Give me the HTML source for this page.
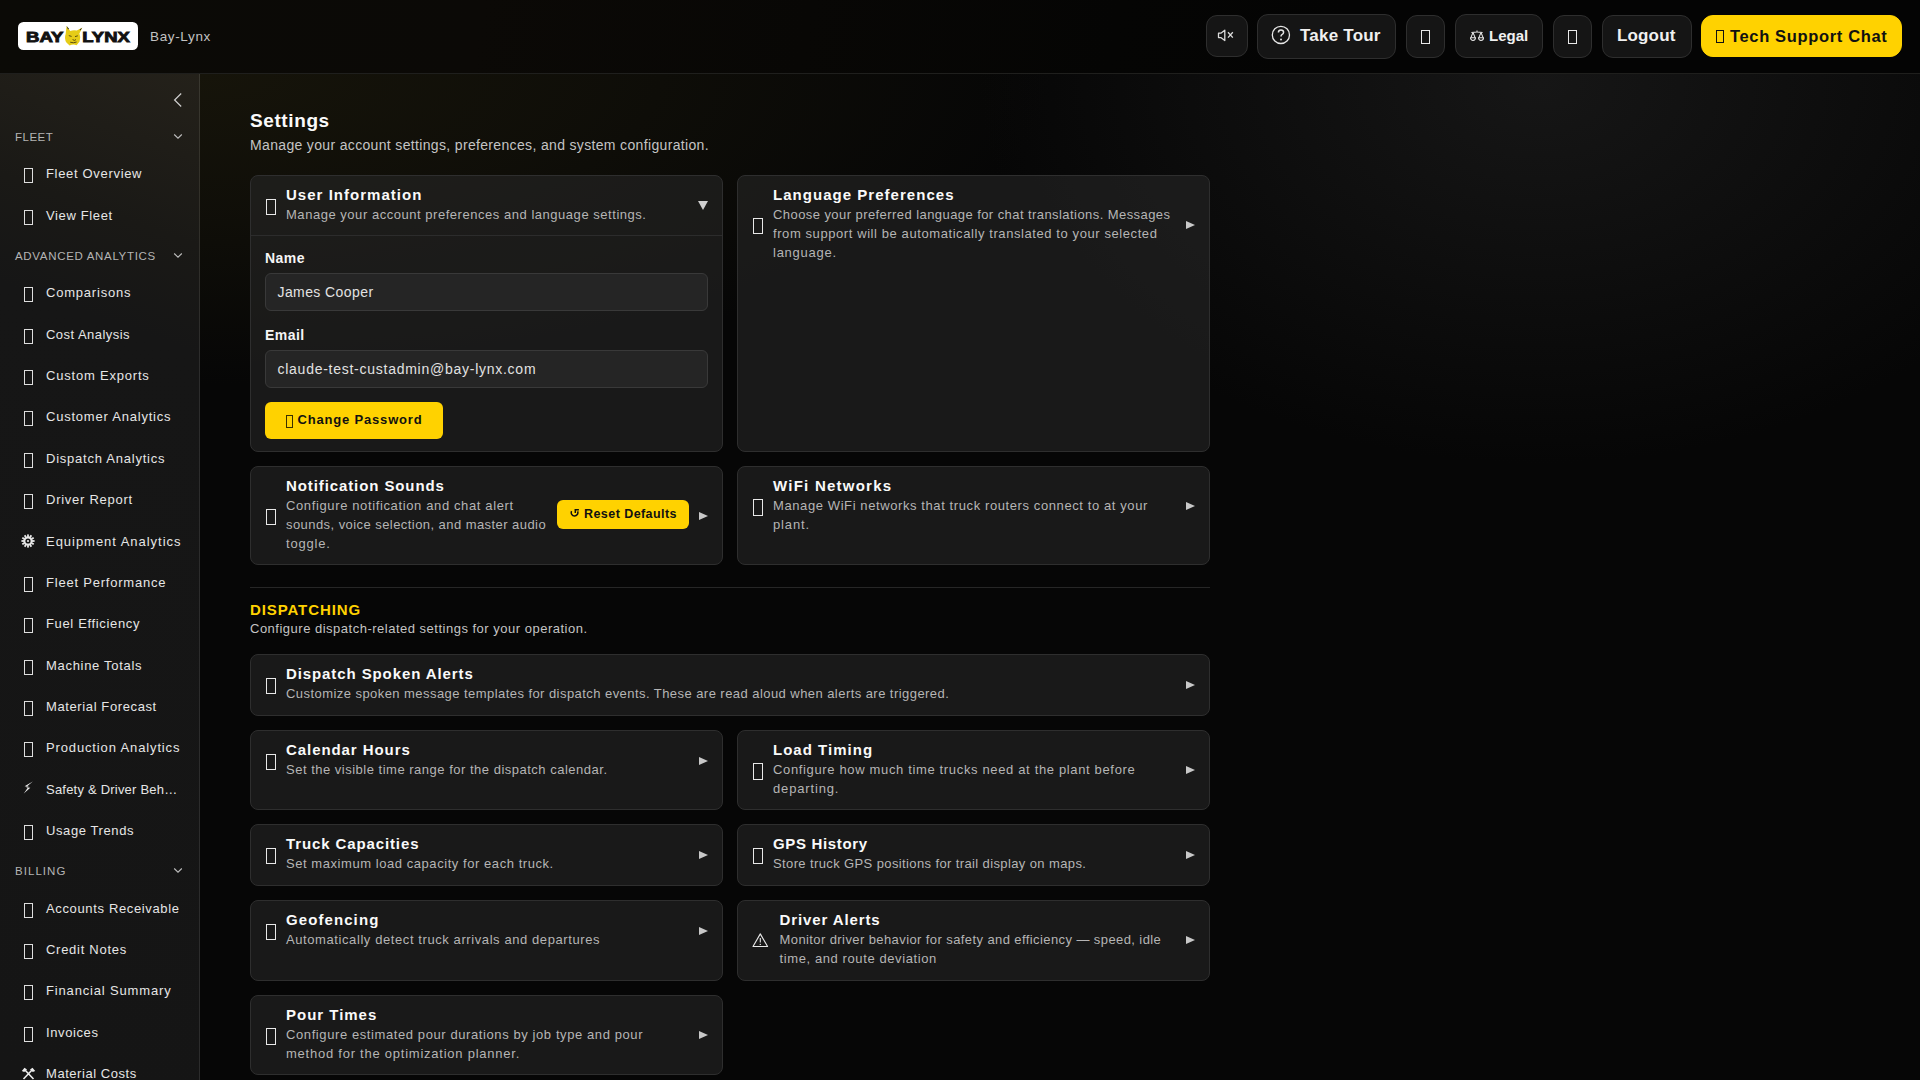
<!DOCTYPE html><html><head><meta charset="utf-8"><style>
*{box-sizing:border-box;margin:0;padding:0}
html,body{width:1920px;height:1080px;overflow:hidden;background:#080808;font-family:"Liberation Sans",sans-serif;color:#f2f2f2}
.a{position:absolute;white-space:nowrap}
#hdr{position:absolute;left:0;top:0;width:1920px;height:74px;background:linear-gradient(100deg,#0b0a06 0%,#0b0906 25%,#080705 42%,#050504 58%,#040404 70%,#040404 100%);border-bottom:1px solid #1f1f1d}
#logo{position:absolute;left:18px;top:22px;width:120px;height:28px;background:#fff;border-radius:6px}
.hbtn{position:absolute;top:15px;height:42px;background:#151515;border:1px solid #2e2e2e;border-radius:11px}
.tofu{position:absolute;border:1px solid #e8e8e8}
#side{position:absolute;left:0;top:74px;width:200px;height:1006px;background:linear-gradient(200deg,#24211a 0%,#1f1d18 8%,#1a1916 16%,#161616 26%,#151515 100%);}
#sideb{position:absolute;left:199px;top:74px;width:1px;height:1006px;background:linear-gradient(180deg,#3a3830 0px,#323029 120px,#2c2c2c 300px,#2c2c2c 100%)}
.sec{position:absolute;left:15px;font-size:11.5px;letter-spacing:1.2px;color:#b4b4b4;line-height:14px;white-space:nowrap}
.it{position:absolute;left:46px;font-size:13px;line-height:20px;color:#e6e6e6;letter-spacing:0.65px;white-space:nowrap}
#main{position:absolute;left:200px;top:74px;width:1720px;height:1006px;background:radial-gradient(ellipse 560px 380px at 1340px 10px,#161616 0%,rgba(22,22,22,0) 100%),radial-gradient(ellipse 850px 310px at 0px 0px,rgb(22,20,10) 0%,rgba(22,20,10,0.6) 45%,rgba(22,20,10,0) 100%),#060606}
.card{position:absolute;background:rgba(39,39,39,0.6);border:1px solid #2e2e2e;border-radius:8px}
.ti{position:absolute;font-size:15px;font-weight:700;color:#fafafa;letter-spacing:0.9px;white-space:nowrap;line-height:19px}
.de{position:absolute;font-size:13px;color:#b5b5b5;letter-spacing:0.45px;line-height:19px;white-space:nowrap}
.ar{position:absolute;width:0;height:0;border-left:9.5px solid #c8c8c8;border-top:4.7px solid transparent;border-bottom:4.7px solid transparent}
</style></head><body>
<div id="hdr">
<svg class="a" style="left:18px;top:22px" width="120" height="28" viewBox="0 0 120 28"><rect x="0" y="0" width="120" height="28" rx="5.5" fill="#fff"/><text x="8" y="19.6" font-family="Liberation Sans" font-weight="700" font-size="15" textLength="37.5" lengthAdjust="spacingAndGlyphs" fill="#111" stroke="#111" stroke-width="0.9">BAY</text><text x="64.3" y="19.6" font-family="Liberation Sans" font-weight="700" font-size="15" textLength="47.5" lengthAdjust="spacingAndGlyphs" fill="#111" stroke="#111" stroke-width="0.9">LYNX</text><path d="M48.6 4.0 L52.2 9.0 Q55.6 7.6 58.8 8.6 L64.2 5.8 L61.4 11.6 Q63.2 15.6 61.6 19.4 L58.6 23.2 Q55 21.6 51.6 23.6 L48.4 20.6 Q46 16.4 47.6 12.2 Z" fill="#e6cc17"/><path d="M48.6 4.0 L50 7.6 L51 6.8 Z M64.2 5.8 L61.6 7.4 L62.4 8.4 Z" fill="#222"/><path d="M50.8 13.6 L53.6 14.4 M57 14.6 L59.8 13.8 M54.6 17.6 L56.4 18.4 L58 17.6 M52.2 20.2 Q55.2 21.4 58.6 20" stroke="#4a4010" stroke-width="0.9" fill="none"/></svg>
<div class="a" style="left:150px;top:29px;font-size:13.5px;color:#c2c2c2;letter-spacing:0.65px;line-height:16px">Bay-Lynx</div>
<div class="hbtn" style="left:1206px;width:42px;height:42px"></div>
<svg class="a" style="left:1217px;top:29px" width="18" height="13" viewBox="0 0 18 13"><path d="M1.5 4.2 H3.8 L7.8 1.2 V11.6 L3.8 8.6 H1.5 Z" fill="none" stroke="#dcdcdc" stroke-width="1.3" stroke-linejoin="round"/><path d="M11 3.2 L15.8 8.6 M15.8 3.2 L11 8.6" stroke="#dcdcdc" stroke-width="1.3"/></svg>
<div class="hbtn" style="left:1257px;top:14px;width:139px;height:45px"></div>
<svg class="a" style="left:1271px;top:25px" width="20" height="20" viewBox="0 0 20 20"><circle cx="9.9" cy="9.9" r="8.6" fill="none" stroke="#e6e6e6" stroke-width="1.3"/><path d="M7.4 7.6 Q7.4 4.9 10 4.9 Q12.6 4.9 12.6 7.3 Q12.6 8.9 10.9 9.6 Q10 10.1 10 11.5" fill="none" stroke="#e6e6e6" stroke-width="1.5"/><circle cx="10" cy="14.4" r="1" fill="#e6e6e6"/></svg>
<div class="a" style="left:1300px;top:26px;font-size:17px;font-weight:700;line-height:20px;color:#f0f0f0;letter-spacing:0.22px">Take Tour</div>
<div class="hbtn" style="left:1406px;width:39px;height:43px"></div>
<div class="tofu" style="left:1421px;top:30px;width:9px;height:14px"></div>
<div class="hbtn" style="left:1455px;top:14px;width:88px;height:44px"></div>
<svg class="a" style="left:1470px;top:29.5px" width="14" height="12" viewBox="0 0 14 12"><path d="M7 0.4 V2.2 M1.4 2.6 Q7 1.4 12.6 2.6 M3 2.5 L0.9 7.6 M3 2.5 L5.1 7.6 M11 2.5 L8.9 7.6 M11 2.5 L13.1 7.6" stroke="#e8e8e8" stroke-width="1.05" fill="none"/><path d="M0.5 7.8 H5.5 A2.5 2.6 0 0 1 0.5 7.8 Z M8.5 7.8 H13.5 A2.5 2.6 0 0 1 8.5 7.8 Z" fill="none" stroke="#e8e8e8" stroke-width="1.05"/></svg>
<div class="a" style="left:1489px;top:26px;font-size:15px;font-weight:700;line-height:20px;color:#f0f0f0">Legal</div>
<div class="hbtn" style="left:1553px;width:39px;height:43px"></div>
<div class="tofu" style="left:1568px;top:30px;width:9px;height:14px"></div>
<div class="hbtn" style="left:1602px;width:90px;height:43px"></div>
<div class="a" style="left:1617px;top:26px;font-size:17px;font-weight:700;line-height:20px;color:#f0f0f0;letter-spacing:0.15px">Logout</div>
<div class="hbtn" style="left:1701px;width:201px;height:42px;background:#ffd200;border-color:#ffd200;border-radius:12px"></div>
<div class="tofu" style="left:1716px;top:30px;width:8px;height:13px;border-color:#111"></div>
<div class="a" style="left:1730px;top:25.5px;font-size:16.5px;font-weight:700;line-height:20px;color:#111;letter-spacing:0.65px">Tech Support Chat</div>
</div>
<div id="side"></div><div id="sideb"></div>
<svg class="a" style="left:173px;top:92px" width="10" height="16" viewBox="0 0 10 16"><path d="M8.2 1.5 L1.6 8 L8.2 14.5" fill="none" stroke="#cfcfcf" stroke-width="1.2"/></svg>
<div class="sec" style="top:129.5px;letter-spacing:0.501px">FLEET</div>
<svg class="a" style="left:173px;top:133px" width="10" height="7" viewBox="0 0 10 7"><path d="M1.2 1.5 L5 5.2 L8.8 1.5" fill="none" stroke="#bdbdbd" stroke-width="1.1"/></svg>
<div class="sec" style="top:248.5px;letter-spacing:0.678px">ADVANCED ANALYTICS</div>
<svg class="a" style="left:173px;top:252px" width="10" height="7" viewBox="0 0 10 7"><path d="M1.2 1.5 L5 5.2 L8.8 1.5" fill="none" stroke="#bdbdbd" stroke-width="1.1"/></svg>
<div class="sec" style="top:863.5px;letter-spacing:1.048px">BILLING</div>
<svg class="a" style="left:173px;top:867px" width="10" height="7" viewBox="0 0 10 7"><path d="M1.2 1.5 L5 5.2 L8.8 1.5" fill="none" stroke="#bdbdbd" stroke-width="1.1"/></svg>
<div class="tofu" style="left:24px;top:168px;width:9px;height:14.5px;border-color:#dedede"></div>
<div class="it" style="top:163.5px;letter-spacing:0.677px">Fleet Overview</div>
<div class="tofu" style="left:24px;top:210px;width:9px;height:14.5px;border-color:#dedede"></div>
<div class="it" style="top:205.5px;letter-spacing:0.637px">View Fleet</div>
<div class="tofu" style="left:24px;top:287px;width:9px;height:14.5px;border-color:#dedede"></div>
<div class="it" style="top:282.5px;letter-spacing:0.791px">Comparisons</div>
<div class="tofu" style="left:24px;top:329px;width:9px;height:14.5px;border-color:#dedede"></div>
<div class="it" style="top:324.5px;letter-spacing:0.454px">Cost Analysis</div>
<div class="tofu" style="left:24px;top:370px;width:9px;height:14.5px;border-color:#dedede"></div>
<div class="it" style="top:365.5px;letter-spacing:0.794px">Custom Exports</div>
<div class="tofu" style="left:24px;top:411px;width:9px;height:14.5px;border-color:#dedede"></div>
<div class="it" style="top:406.5px;letter-spacing:0.778px">Customer Analytics</div>
<div class="tofu" style="left:24px;top:453px;width:9px;height:14.5px;border-color:#dedede"></div>
<div class="it" style="top:448.5px;letter-spacing:0.765px">Dispatch Analytics</div>
<div class="tofu" style="left:24px;top:494px;width:9px;height:14.5px;border-color:#dedede"></div>
<div class="it" style="top:489.5px;letter-spacing:0.742px">Driver Report</div>
<svg class="a" style="left:21px;top:533.5px" width="14" height="14" viewBox="0 0 14 14"><g fill="#e8e8e8"><circle cx="7" cy="7" r="4.6"/><rect x="6.1" y="0.4" width="1.8" height="2.6" transform="rotate(0 7 7)"/><rect x="6.1" y="0.4" width="1.8" height="2.6" transform="rotate(30 7 7)"/><rect x="6.1" y="0.4" width="1.8" height="2.6" transform="rotate(60 7 7)"/><rect x="6.1" y="0.4" width="1.8" height="2.6" transform="rotate(90 7 7)"/><rect x="6.1" y="0.4" width="1.8" height="2.6" transform="rotate(120 7 7)"/><rect x="6.1" y="0.4" width="1.8" height="2.6" transform="rotate(150 7 7)"/><rect x="6.1" y="0.4" width="1.8" height="2.6" transform="rotate(180 7 7)"/><rect x="6.1" y="0.4" width="1.8" height="2.6" transform="rotate(210 7 7)"/><rect x="6.1" y="0.4" width="1.8" height="2.6" transform="rotate(240 7 7)"/><rect x="6.1" y="0.4" width="1.8" height="2.6" transform="rotate(270 7 7)"/><rect x="6.1" y="0.4" width="1.8" height="2.6" transform="rotate(300 7 7)"/><rect x="6.1" y="0.4" width="1.8" height="2.6" transform="rotate(330 7 7)"/></g><circle cx="7" cy="7" r="2.6" fill="#151515"/><circle cx="7" cy="7" r="1.1" fill="#e8e8e8"/></svg>
<div class="it" style="top:531.5px;letter-spacing:0.968px">Equipment Analytics</div>
<div class="tofu" style="left:24px;top:577px;width:9px;height:14.5px;border-color:#dedede"></div>
<div class="it" style="top:572.5px;letter-spacing:0.785px">Fleet Performance</div>
<div class="tofu" style="left:24px;top:618px;width:9px;height:14.5px;border-color:#dedede"></div>
<div class="it" style="top:613.5px;letter-spacing:0.657px">Fuel Efficiency</div>
<div class="tofu" style="left:24px;top:660px;width:9px;height:14.5px;border-color:#dedede"></div>
<div class="it" style="top:655.5px;letter-spacing:0.694px">Machine Totals</div>
<div class="tofu" style="left:24px;top:701px;width:9px;height:14.5px;border-color:#dedede"></div>
<div class="it" style="top:696.5px;letter-spacing:0.611px">Material Forecast</div>
<div class="tofu" style="left:24px;top:742px;width:9px;height:14.5px;border-color:#dedede"></div>
<div class="it" style="top:737.5px;letter-spacing:0.864px">Production Analytics</div>
<svg class="a" style="left:23px;top:781px" width="11" height="13" viewBox="0 0 11 13"><path d="M9.8 0.5 L3 6.3 L7.3 6.8 L0.8 12.6 L5.6 5.6 L1.6 5.2 Z" fill="#ececec"/></svg>
<div class="it" style="top:779.5px;letter-spacing:0.213px">Safety &amp; Driver Beh…</div>
<div class="tofu" style="left:24px;top:825px;width:9px;height:14.5px;border-color:#dedede"></div>
<div class="it" style="top:820.5px;letter-spacing:0.597px">Usage Trends</div>
<div class="tofu" style="left:24px;top:903px;width:9px;height:14.5px;border-color:#dedede"></div>
<div class="it" style="top:898.5px;letter-spacing:0.644px">Accounts Receivable</div>
<div class="tofu" style="left:24px;top:944px;width:9px;height:14.5px;border-color:#dedede"></div>
<div class="it" style="top:939.5px;letter-spacing:0.723px">Credit Notes</div>
<div class="tofu" style="left:24px;top:985px;width:9px;height:14.5px;border-color:#dedede"></div>
<div class="it" style="top:980.5px;letter-spacing:0.840px">Financial Summary</div>
<div class="tofu" style="left:24px;top:1027px;width:9px;height:14.5px;border-color:#dedede"></div>
<div class="it" style="top:1022.5px;letter-spacing:0.600px">Invoices</div>
<svg class="a" style="left:21px;top:1066.5px" width="15" height="13" viewBox="0 0 15 13"><path d="M2.5 12 L11.5 2.5 M12.5 12 L3.5 2.5" stroke="#ececec" stroke-width="1.6"/><path d="M0.8 4 L3.5 0.8 L6 2.6 L3.2 5 Z M14.2 4 L11.5 0.8 L9 2.6 L11.8 5 Z" fill="#ececec"/></svg>
<div class="it" style="top:1063.5px;letter-spacing:0.548px">Material Costs</div>
<div id="main"></div>
<div class="a" style="left:250px;top:110px;font-size:19px;font-weight:700;line-height:22px;color:#fafafa;letter-spacing:0.6px">Settings</div>
<div class="a" style="left:250px;top:136px;font-size:14px;line-height:18px;color:#c4c4c4;letter-spacing:0.34px">Manage your account settings, preferences, and system configuration.</div>
<div class="card" style="left:250px;top:175px;width:473px;height:277px"></div>
<div class="tofu" style="left:265.5px;top:198.5px;width:10.5px;height:16.5px"></div>
<div class="ti" style="left:286px;top:185.3px;letter-spacing:1.026px">User Information</div>
<div class="de" style="left:286px;top:205.0px;letter-spacing:0.533px">Manage your account preferences and language settings.</div>
<div class="a" style="left:698px;top:201px;width:0;height:0;border-top:9px solid #cfcfcf;border-left:5px solid transparent;border-right:5px solid transparent"></div>
<div class="a" style="left:251px;top:235px;width:471px;height:1px;background:#2c2c2c"></div>
<div class="a" style="left:265px;top:249px;font-size:14px;font-weight:700;line-height:19px;color:#f5f5f5;letter-spacing:0.45px">Name</div>
<div class="a" style="left:265px;top:273px;width:443px;height:38px;background:#252525;border:1px solid #393939;border-radius:6px"></div>
<div class="a" style="left:277.5px;top:283.3px;font-size:14px;line-height:19px;color:#e2e2e2;letter-spacing:0.41px">James Cooper</div>
<div class="a" style="left:265px;top:326px;font-size:14px;font-weight:700;line-height:19px;color:#f5f5f5;letter-spacing:0.45px">Email</div>
<div class="a" style="left:265px;top:350px;width:443px;height:38px;background:#252525;border:1px solid #393939;border-radius:6px"></div>
<div class="a" style="left:277.5px;top:360.3px;font-size:14px;line-height:19px;color:#e2e2e2;letter-spacing:0.74px">claude-test-custadmin@bay-lynx.com</div>
<div class="a" style="left:265px;top:402px;width:178px;height:37px;background:#ffd200;border-radius:6px"></div>
<div class="tofu" style="left:285.5px;top:414.5px;width:7px;height:13px;border-color:#3a3000"></div>
<div class="a" style="left:297.5px;top:412px;font-size:13px;font-weight:700;line-height:16px;color:#111;letter-spacing:0.82px">Change Password</div>
<div class="card" style="left:737px;top:175px;width:473px;height:277px"></div>
<div class="tofu" style="left:752.5px;top:217.5px;width:10.5px;height:16.5px"></div>
<div class="ti" style="left:773px;top:185.3px;letter-spacing:1.031px">Language Preferences</div>
<div class="de" style="left:773px;top:205.0px;letter-spacing:0.431px">Choose your preferred language for chat translations. Messages</div>
<div class="de" style="left:773px;top:224.0px;letter-spacing:0.584px">from support will be automatically translated to your selected</div>
<div class="de" style="left:773px;top:243.0px;letter-spacing:0.747px">language.</div>
<div class="ar" style="left:1185.5px;top:220.8px"></div>
<div class="card" style="left:250px;top:466px;width:473px;height:99px"></div>
<div class="tofu" style="left:265.5px;top:508.5px;width:10.5px;height:16.5px"></div>
<div class="ti" style="left:286px;top:476.3px;letter-spacing:0.902px">Notification Sounds</div>
<div class="de" style="left:286px;top:496.0px;letter-spacing:0.627px">Configure notification and chat alert</div>
<div class="de" style="left:286px;top:515.0px;letter-spacing:0.438px">sounds, voice selection, and master audio</div>
<div class="de" style="left:286px;top:534.0px;letter-spacing:0.792px">toggle.</div>
<div class="ar" style="left:698.5px;top:511.8px"></div>
<div class="a" style="left:557px;top:500px;width:132px;height:29px;background:#ffd200;border-radius:6px"></div>
<svg class="a" style="left:570px;top:508px" width="10" height="10" viewBox="0 0 10 10"><path d="M1.6 3.2 A3.3 3.3 0 1 0 7.6 3.4" fill="none" stroke="#111" stroke-width="1.5"/><path d="M5.3 5 V1.7 H8.9" fill="none" stroke="#111" stroke-width="1.5"/></svg>
<div class="a" style="left:584px;top:505.5px;font-size:12.5px;font-weight:700;line-height:16px;color:#111;letter-spacing:0.44px">Reset Defaults</div>
<div class="card" style="left:737px;top:466px;width:473px;height:99px"></div>
<div class="tofu" style="left:752.5px;top:499.0px;width:10.5px;height:16.5px"></div>
<div class="ti" style="left:773px;top:476.3px;letter-spacing:1.240px">WiFi Networks</div>
<div class="de" style="left:773px;top:496.0px;letter-spacing:0.596px">Manage WiFi networks that truck routers connect to at your</div>
<div class="de" style="left:773px;top:515.0px;letter-spacing:0.858px">plant.</div>
<div class="ar" style="left:1185.5px;top:502.3px"></div>
<div class="a" style="left:250px;top:587px;width:960px;height:1px;background:#262626"></div>
<div class="a" style="left:250px;top:601px;font-size:15px;font-weight:700;line-height:18px;color:#ffd200;letter-spacing:0.9px">DISPATCHING</div>
<div class="a" style="left:250px;top:620px;font-size:13px;line-height:18px;color:#c4c4c4;letter-spacing:0.5px">Configure dispatch-related settings for your operation.</div>
<div class="card" style="left:250px;top:654px;width:960px;height:62px"></div>
<div class="tofu" style="left:265.5px;top:677.5px;width:10.5px;height:16.5px"></div>
<div class="ti" style="left:286px;top:664.3px;letter-spacing:0.903px">Dispatch Spoken Alerts</div>
<div class="de" style="left:286px;top:684.0px;letter-spacing:0.443px">Customize spoken message templates for dispatch events. These are read aloud when alerts are triggered.</div>
<div class="ar" style="left:1185.5px;top:680.8px"></div>
<div class="card" style="left:250px;top:730px;width:473px;height:80px"></div>
<div class="tofu" style="left:265.5px;top:753.5px;width:10.5px;height:16.5px"></div>
<div class="ti" style="left:286px;top:740.3px;letter-spacing:0.931px">Calendar Hours</div>
<div class="de" style="left:286px;top:760.0px;letter-spacing:0.503px">Set the visible time range for the dispatch calendar.</div>
<div class="ar" style="left:698.5px;top:756.8px"></div>
<div class="card" style="left:737px;top:730px;width:473px;height:80px"></div>
<div class="tofu" style="left:752.5px;top:763.0px;width:10.5px;height:16.5px"></div>
<div class="ti" style="left:773px;top:740.3px;letter-spacing:1.021px">Load Timing</div>
<div class="de" style="left:773px;top:760.0px;letter-spacing:0.650px">Configure how much time trucks need at the plant before</div>
<div class="de" style="left:773px;top:779.0px;letter-spacing:0.841px">departing.</div>
<div class="ar" style="left:1185.5px;top:766.3px"></div>
<div class="card" style="left:250px;top:824px;width:473px;height:62px"></div>
<div class="tofu" style="left:265.5px;top:847.5px;width:10.5px;height:16.5px"></div>
<div class="ti" style="left:286px;top:834.3px;letter-spacing:0.884px">Truck Capacities</div>
<div class="de" style="left:286px;top:854.0px;letter-spacing:0.557px">Set maximum load capacity for each truck.</div>
<div class="ar" style="left:698.5px;top:850.8px"></div>
<div class="card" style="left:737px;top:824px;width:473px;height:62px"></div>
<div class="tofu" style="left:752.5px;top:847.5px;width:10.5px;height:16.5px"></div>
<div class="ti" style="left:773px;top:834.3px;letter-spacing:0.657px">GPS History</div>
<div class="de" style="left:773px;top:854.0px;letter-spacing:0.383px">Store truck GPS positions for trail display on maps.</div>
<div class="ar" style="left:1185.5px;top:850.8px"></div>
<div class="card" style="left:250px;top:900px;width:473px;height:81px"></div>
<div class="tofu" style="left:265.5px;top:923.5px;width:10.5px;height:16.5px"></div>
<div class="ti" style="left:286px;top:910.3px;letter-spacing:1.087px">Geofencing</div>
<div class="de" style="left:286px;top:930.0px;letter-spacing:0.588px">Automatically detect truck arrivals and departures</div>
<div class="ar" style="left:698.5px;top:926.8px"></div>
<div class="card" style="left:737px;top:900px;width:473px;height:81px"></div>
<svg class="a" style="left:752px;top:933.0px" width="17" height="15" viewBox="0 0 17 15"><path d="M8.3 0.9 L15.6 13.5 H1.0 Z" fill="none" stroke="#e8e8e8" stroke-width="1.1" stroke-linejoin="round"/><path d="M8.3 5 V9.6" stroke="#e8e8e8" stroke-width="1.1"/><circle cx="8.3" cy="11.4" r="0.7" fill="#e8e8e8"/></svg>
<div class="ti" style="left:779.5px;top:910.3px;letter-spacing:0.892px">Driver Alerts</div>
<div class="de" style="left:779.5px;top:930.0px;letter-spacing:0.408px">Monitor driver behavior for safety and efficiency — speed, idle</div>
<div class="de" style="left:779.5px;top:949.0px;letter-spacing:0.601px">time, and route deviation</div>
<div class="ar" style="left:1185.5px;top:936.3px"></div>
<div class="card" style="left:250px;top:995px;width:473px;height:80px"></div>
<div class="tofu" style="left:265.5px;top:1028.0px;width:10.5px;height:16.5px"></div>
<div class="ti" style="left:286px;top:1005.3px;letter-spacing:0.986px">Pour Times</div>
<div class="de" style="left:286px;top:1025.0px;letter-spacing:0.593px">Configure estimated pour durations by job type and pour</div>
<div class="de" style="left:286px;top:1044.0px;letter-spacing:0.760px">method for the optimization planner.</div>
<div class="ar" style="left:698.5px;top:1031.3px"></div>
</body></html>
